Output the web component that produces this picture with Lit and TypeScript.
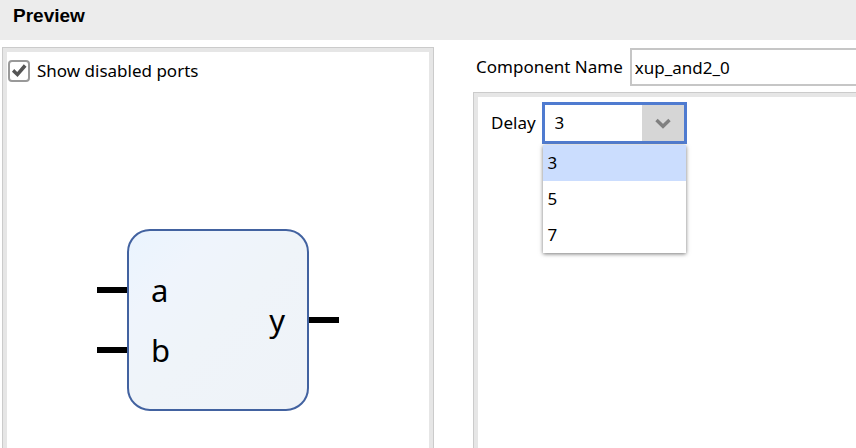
import { LitElement, html, css } from "lit";
import { customElement, state } from "lit/decorators.js";
import { classMap } from "lit/directives/class-map.js";

@customElement("block-symbol")
class BlockSymbol extends LitElement {
  static styles = css`
    :host {
      display: block;
    }
    .symbol {
      display: block;
    }
    .body {
      fill: url(#fill);
      stroke: #4262a0;
      stroke-width: 2;
    }
    .pin {
      fill: #000;
    }
    .port {
      font: 31px "Noto Sans", "Open Sans", sans-serif;
      fill: #000;
    }
    .end {
      text-anchor: end;
    }
  `;

  render() {
    return html`
      <svg class="symbol" width="242" height="182" viewBox="0 0 242 182" role="img" aria-label="Block symbol">
        <defs>
          <linearGradient id="fill" x1="0" y1="0" x2="1" y2="1">
            <stop offset="0" stop-color="#eaf4fe" />
            <stop offset="0.25" stop-color="#eff4fc" />
            <stop offset="0.5" stop-color="#eff4f9" />
            <stop offset="1" stop-color="#eff3f8" />
          </linearGradient>
        </defs>
        <rect class="pin" x="0" y="58" width="30" height="6" />
        <rect class="pin" x="0" y="118" width="30" height="6" />
        <rect class="pin" x="212" y="88" width="30" height="6" />
        <rect class="body" x="31" y="1" width="180" height="180" rx="22" />
        <text class="port" x="54" y="73">a</text>
        <text class="port" x="54" y="133">b</text>
        <text class="port end" x="188" y="103">y</text>
      </svg>
    `;
  }
}

@customElement("app-root")
class AppRoot extends LitElement {
  static styles = css`
    :host {
      display: flex;
      flex-direction: column;
      min-height: 100vh;
      background: #fff;
      color: #000;
      font: 17px/24px "Noto Sans", "Open Sans", sans-serif;
    }
    *,
    *::before {
      box-sizing: border-box;
    }
    .header {
      height: 40px;
      padding: 4px 13px;
      background: #ececec;
    }
    .title {
      margin: 0;
      font: bold 19px/24px "Liberation Sans", Arial, sans-serif;
    }
    .content {
      flex: 1;
      display: grid;
      grid-template-columns: 432fr 383fr;
      column-gap: 39px;
      padding-left: 2px;
    }
    .panel {
      border: 1px solid #cbcbcb;
      border-bottom: 0;
    }
    .preview {
      margin-top: 7px;
      padding: 11px 5px 0;
      box-shadow: inset 4px 4px #e6e6e6, inset -4px 0 #e6e6e6;
    }
    .check {
      display: flex;
      align-items: center;
      gap: 7px;
      height: 24px;
    }
    .box {
      appearance: none;
      display: grid;
      place-items: center;
      width: 22px;
      height: 22px;
      margin: 0;
      border: 2px solid #999;
      border-radius: 4px;
      background: #fff;
    }
    .box:checked::before {
      content: "";
      width: 16px;
      height: 16px;
      background: #555;
      clip-path: polygon(6% 54%, 20% 38%, 39% 56%, 80% 8%, 97% 23%, 41% 88%);
    }
    .canvas {
      display: flex;
      justify-content: center;
      padding: 146px 0 32px;
    }
    .config {
      display: flex;
      flex-direction: column;
      min-width: 0;
    }
    .name-row {
      display: flex;
      align-items: center;
      gap: 7px;
      height: 38px;
      margin: 8px 0 6px;
      padding-left: 3px;
    }
    .name {
      flex: 1;
      min-width: 0;
      height: 38px;
      padding: 0 3px;
      border: 2px solid #c6c6c6;
      border-right: 0;
      background: #fff;
      color: inherit;
      font: inherit;
      outline: 0;
    }
    .options {
      flex: 1;
      border-right: 0;
      padding: 9px 17px 0;
      box-shadow: inset 4px 4px #e6e6e6;
    }
    .field {
      display: flex;
      align-items: center;
      gap: 6px;
    }
    .combo {
      position: relative;
      width: 145px;
    }
    .select {
      appearance: none;
      display: block;
      width: 100%;
      height: 42px;
      padding: 0 10px;
      border: 3px solid #4f7bd0;
      border-radius: 0;
      background: linear-gradient(#d6d6d6, #d6d6d6) right / 42px 100% no-repeat #fff;
      color: inherit;
      font: inherit;
      outline: 0;
    }
    .chevron {
      position: absolute;
      right: 16px;
      top: 16px;
      pointer-events: none;
    }
    .menu {
      position: absolute;
      top: 43px;
      left: 1px;
      right: 1px;
      margin: 0;
      padding: 0;
      list-style: none;
      background: #fff;
      box-shadow: 0 1px 4px #777;
    }
    .item {
      padding: 6px 5px;
      cursor: default;
    }
    .selected {
      background: #cbddfe;
    }
  `;

  @state() private delay = "3";
  private delays = ["3", "5", "7"];

  render() {
    return html`
      <header class="header"><h1 class="title">Preview</h1></header>
      <main class="content">
        <section class="panel preview">
          <label class="check">
            <input class="box" type="checkbox" checked />
            <span>Show disabled ports</span>
          </label>
          <div class="canvas"><block-symbol></block-symbol></div>
        </section>
        <section class="config">
          <div class="name-row">
            <label for="name">Component Name</label>
            <input class="name" id="name" type="text" value="xup_and2_0" />
          </div>
          <div class="panel options">
            <div class="field">
              <label for="delay">Delay</label>
              <div class="combo">
                <select
                  class="select"
                  id="delay"
                  @change=${(e: Event) => (this.delay = (e.target as HTMLSelectElement).value)}
                >
                  ${this.delays.map((d) => html`<option value=${d} ?selected=${d === this.delay}>${d}</option>`)}
                </select>
                <svg class="chevron" width="16" height="11" viewBox="0 0 16 11" aria-hidden="true">
                  <path d="M1.5 2 L8 8.3 L14.5 2" fill="none" stroke="#808080" stroke-width="3.4" />
                </svg>
                <ul class="menu" role="listbox" aria-label="Delay">
                  ${this.delays.map(
                    (d) => html`<li
                      class=${classMap({ item: true, selected: d === this.delay })}
                      role="option"
                      aria-selected=${d === this.delay}
                      @click=${() => (this.delay = d)}
                    >${d}</li>`
                  )}
                </ul>
              </div>
            </div>
          </div>
        </section>
      </main>
    `;
  }
}
